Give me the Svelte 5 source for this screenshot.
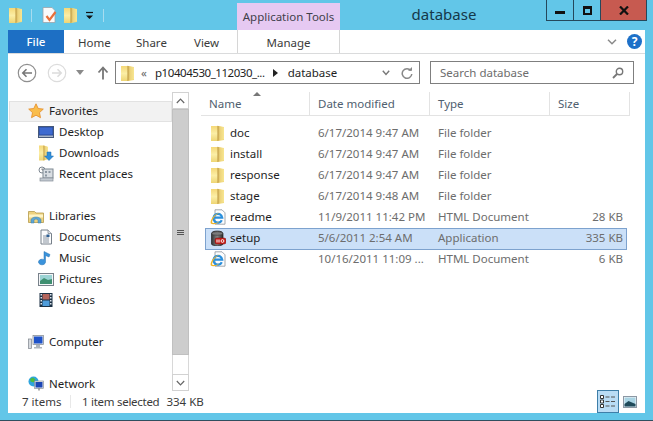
<script>
  const nav = [
    { label: 'Favorites', icon: 'star', top: true, hover: true },
    { label: 'Desktop', icon: 'desktop' },
    { label: 'Downloads', icon: 'downloads' },
    { label: 'Recent places', icon: 'recent' },
    { gap: true },
    { label: 'Libraries', icon: 'library', top: true },
    { label: 'Documents', icon: 'doc' },
    { label: 'Music', icon: 'music' },
    { label: 'Pictures', icon: 'pictures' },
    { label: 'Videos', icon: 'videos' },
    { gap: true },
    { label: 'Computer', icon: 'computer', top: true },
    { gap: true },
    { label: 'Network', icon: 'network', top: true }
  ];

  const files = [
    { name: 'doc', icon: 'folder', date: '6/17/2014 9:47 AM', type: 'File folder', size: '' },
    { name: 'install', icon: 'folder', date: '6/17/2014 9:47 AM', type: 'File folder', size: '' },
    { name: 'response', icon: 'folder', date: '6/17/2014 9:47 AM', type: 'File folder', size: '' },
    { name: 'stage', icon: 'folder', date: '6/17/2014 9:48 AM', type: 'File folder', size: '' },
    { name: 'readme', icon: 'ie', date: '11/9/2011 11:42 PM', type: 'HTML Document', size: '28 KB' },
    { name: 'setup', icon: 'setup', date: '5/6/2011 2:54 AM', type: 'Application', size: '335 KB', selected: true },
    { name: 'welcome', icon: 'ie', date: '10/16/2011 11:09 ...', type: 'HTML Document', size: '6 KB' }
  ];
</script>

{#snippet icon(name)}
  <svg class="ico" viewBox="0 0 16 16" width="16" height="16" aria-hidden="true">
    {#if name === 'folder'}
      <path d="M1 1h7l6 1v13l-6 1H1z" fill="url(#fold)" />
      <path d="M7.500 .8L14 2.500v11.500l-6.500 2z" fill="url(#foldDark)" />
    {:else if name === 'star'}
      <path d="M8 .8l2.200 4.700 5.100.6-3.800 3.500 1 5.100L8 12.200l-4.500 2.500 1-5.100L.7 6.100l5.100-.6z" fill="#f9bd4c" stroke="#e58a25" stroke-width=".8" />
    {:else if name === 'desktop'}
      <rect x="0.500" y="2.500" width="15" height="11" fill="#2a4a9a" stroke="#45587a" />
      <rect x="1.500" y="3.500" width="13" height="7" fill="#3d6ad0" />
      <rect x="1" y="11.500" width="14" height="1.500" fill="#a9b6c8" />
    {:else if name === 'downloads'}
      <path d="M1 .5h5l4 1.500v12l-4 1.500H1z" fill="url(#fold)" />
      <path d="M5.500 .5l4.500 1.500v12l-4.500 1.500z" fill="url(#foldDark)" />
      <path d="M9 7h4v4h2.500L11 15.500 6.500 11H9z" fill="#2f8fdc" stroke="#1d6aaa" stroke-width=".5" />
    {:else if name === 'recent'}
      <circle cx="4" cy="4" r="3" fill="#fff" stroke="#7d8791" />
      <path d="M4 2.500V4h1.500" fill="none" stroke="#555" stroke-width=".7" />
      <rect x="5" y="3" width="10" height="9" fill="#d9dee3" stroke="#7d8791" />
      <path d="M7 5h2v2H7zM10.500 5h2v2h-2zM7 8.500h2v2H7z" fill="#8d98a3" />
      <rect x="2" y="12" width="13" height="3" fill="#c3cad1" stroke="#858e97" stroke-width=".7" />
    {:else if name === 'library'}
      <path d="M.5 3.500h6l1.500 1.500h7.500v9.500H.5z" fill="#eed27e" stroke="#b59a4c" stroke-width=".8" />
      <path d="M1 6.500h14v3H1z" fill="#fff4c4" />
      <path d="M3 15v-3a5 3 0 0 1 10 0v3h-3v-2.500a2 1.500 0 0 0-4 0V15z" fill="#5ea6d4" stroke="#3a7ea8" stroke-width=".5" />
    {:else if name === 'doc'}
      <path d="M3 1h7l3.500 3.500V15H3z" fill="#fbfcfd" stroke="#77808a" />
      <path d="M10 1v3.500h3.500" fill="#dfe4e9" stroke="#77808a" stroke-width=".7" />
      <path d="M5 7h6M5 9h6M5 11h6M5 13h6" stroke="#6d7a88" stroke-width=".8" />
      <rect x="8.500" y="5.500" width="3" height="2.500" fill="#2d5f93" />
    {:else if name === 'music'}
      <path d="M6 1.500l6 3-1 2.500-3.500-1.500V12a3.500 2.800 0 1 1-1.500-2.300z" fill="#3a93dc" stroke="#2470b0" stroke-width=".5" />
    {:else if name === 'pictures'}
      <rect x="0.500" y="2.500" width="15" height="12" fill="#f3f5f7" stroke="#78818a" />
      <rect x="2" y="4" width="12" height="9" fill="#9bd3d4" />
      <path d="M2 10l4-3 4 2 4-1v5H2z" fill="#3e8f70" />
    {:else if name === 'videos'}
      <rect x="1.500" y="1" width="13" height="14" fill="#1c3144" />
      <path d="M2.500 2h1.500v1.500H2.500zM2.500 5h1.500v1.500H2.500zM2.500 8h1.500v1.500H2.500zM2.500 11h1.500v1.500H2.500zM12 2h1.500v1.500H12zM12 5h1.500v1.500H12zM12 8h1.500v1.500H12zM12 11h1.500v1.500H12z" fill="#dce6ef" />
      <rect x="4.500" y="2" width="7" height="5.500" fill="#b4655c" />
      <rect x="4.500" y="8.500" width="7" height="5.500" fill="#4f9ddb" />
    {:else if name === 'computer'}
      <rect x="0.500" y="5" width="3" height="9.500" fill="#d6dadf" stroke="#7c848c" stroke-width=".7" />
      <rect x="5" y="1.500" width="10.500" height="9" fill="#e6e9ed" stroke="#7c848c" stroke-width=".7" />
      <rect x="6" y="2.500" width="8.500" height="7" fill="#1f53c9" />
      <path d="M8 11h4v2h2v1.500H6V13h2z" fill="#aeb5bc" />
    {:else if name === 'network'}
      <circle cx="5.500" cy="5.500" r="5" fill="#2fa5de" />
      <path d="M2 3l3-1.500 2.500 2-2 3-3-1zM7 8l2 1-2 2z" fill="#4dbb3e" />
      <rect x="6.500" y="5" width="9" height="7.500" fill="#e6e9ed" stroke="#7c848c" stroke-width=".6" />
      <rect x="7.500" y="6" width="7" height="5.500" fill="#1c46b4" />
      <path d="M10.500 12.500h1v2h-1z" fill="#555" />
    {:else if name === 'ie'}
      <path d="M5 .8h7l3 3v11.400H5z" fill="#fcfdfe" stroke="#8a929a" stroke-width=".8" />
      <path d="M11.800 11.200A4.400 4.400 0 1 1 12.200 8.600H4" fill="none" stroke="#2a8fdc" stroke-width="2.200" />
      <path d="M.8 14.500C-.4 11 4.500 4.500 10 3.500 5.500 5.500 2.300 10 2 13.500c2 1 5 .8 8-1.500-2.800 3.200-7.200 4.200-9.200 2.500z" fill="#f0b429" />
    {:else if name === 'setup'}
      <path d="M1.500 3.500c0-3.300 11.500-3.300 11.500 0v10.500c0 2.400-11.500 2.400-11.500 0z" fill="url(#drum)" stroke="#222" stroke-width=".7" />
      <ellipse cx="7.250" cy="3.500" rx="5.500" ry="1.800" fill="#7c7c7c" stroke="#2a2a2a" stroke-width=".5" />
      <rect x="5" y="8" width="11" height="6" rx="2" fill="#c6201c" stroke="#7c0f0f" stroke-width=".5" />
      <path d="M7 9.500v3M9 9.500v3" stroke="#fff" stroke-width="1" />
      <circle cx="12.500" cy="11" r="1.400" fill="none" stroke="#fff" stroke-width=".9" />
    {/if}
  </svg>
{/snippet}

<svg class="defs" width="0" height="0" aria-hidden="true">
  <defs>
    <linearGradient id="fold" x1="0" y1="0" x2="0" y2="1">
      <stop offset="0" stop-color="#f5d877" />
      <stop offset=".5" stop-color="#fbeea6" />
      <stop offset="1" stop-color="#eed574" />
    </linearGradient>
    <linearGradient id="foldDark" x1="0" y1="0" x2="1" y2="0">
      <stop offset="0" stop-color="#b8933c" />
      <stop offset=".35" stop-color="#ecd27a" />
      <stop offset="1" stop-color="#f8e691" />
    </linearGradient>
    <linearGradient id="drum" x1="0" y1="0" x2="1" y2="0">
      <stop offset="0" stop-color="#333" />
      <stop offset=".5" stop-color="#858585" />
      <stop offset="1" stop-color="#2c2c2c" />
    </linearGradient>
  </defs>
</svg>

<div class="window">
  <header class="titlebar">
    <div class="qat">
      <span class="qat-folder">{@render icon('folder')}</span>
      <span class="qat-sep"></span>
      <svg class="qat-note" viewBox="0 0 16 16" width="16" height="16" aria-hidden="true">
        <path d="M2 .5h9l3 3v12H2z" fill="#fafafa" stroke="#9aa3ab" stroke-width=".8" />
        <path d="M5.500 9l3 4 6-8" fill="none" stroke="#e8703a" stroke-width="2.200" />
      </svg>
      <span class="qat-folder second">{@render icon('folder')}</span>
      <svg class="qat-drop" viewBox="0 0 9 9" width="9" height="9" aria-hidden="true">
        <path d="M1 1.500h7" stroke="#111" stroke-width="1.200" />
        <path d="M1 4.500h7L4.500 8z" fill="#111" />
      </svg>
      <span class="qat-sep last"></span>
    </div>
    <div class="tools-tab">Application Tools</div>
    <div class="title">database</div>
    <div class="controls">
      <button class="ctl min" aria-label="Minimize"><span></span></button>
      <button class="ctl max" aria-label="Maximize"><span></span></button>
      <button class="ctl close" aria-label="Close">
        <svg viewBox="0 0 10 9" width="10" height="9"><path d="M1 .5l8 8M9 .5l-8 8" stroke="#111" stroke-width="2.200" /></svg>
      </button>
    </div>
  </header>

  <div class="body">
    <nav class="ribbon">
      <div class="tab file">File</div>
      <div class="tab home">Home</div>
      <div class="tab share">Share</div>
      <div class="tab view">View</div>
      <div class="tab manage">Manage</div>
      <svg class="chev" viewBox="0 0 10 6" width="10" height="6" aria-hidden="true"><path d="M1 .8l4 4 4-4" fill="none" stroke="#8a8a8a" stroke-width="1.500" /></svg>
      <div class="help">?</div>
    </nav>

    <div class="addressrow">
      <div class="navbtns">
        <svg viewBox="0 0 20 20" width="20" height="20" aria-hidden="true">
          <circle cx="10" cy="10" r="8.700" fill="#fff" stroke="#8f8f8f" stroke-width="1.200" />
          <path d="M15 10H6M9.500 6.300L5.800 10l3.700 3.700" fill="none" stroke="#777" stroke-width="1.600" />
        </svg>
        <svg class="fwd" viewBox="0 0 20 20" width="20" height="20" aria-hidden="true">
          <circle cx="10" cy="10" r="8.700" fill="#fff" stroke="#dcdcdc" stroke-width="1.200" />
          <path d="M5 10h9M10.500 6.300l3.700 3.700-3.700 3.700" fill="none" stroke="#dcdcdc" stroke-width="1.600" />
        </svg>
        <svg class="recent-drop" viewBox="0 0 8 5" width="8" height="5" aria-hidden="true"><path d="M0 0h8L4 5z" fill="#8a8a8a" /></svg>
        <svg class="up" viewBox="0 0 12 14" width="12" height="14" aria-hidden="true"><path d="M6 13.500V2M1.500 6.500L6 1.500l4.500 5" fill="none" stroke="#777" stroke-width="1.800" /></svg>
      </div>
      <div class="address">
        {@render icon('folder')}
        <span class="crumb-more">«</span>
        <span class="crumb long">p10404530_112030_...</span>
        <svg class="crumb-arrow" viewBox="0 0 5 8" width="5" height="8" aria-hidden="true"><path d="M0 0l5 4-5 4z" fill="#222" /></svg>
        <span class="crumb">database</span>
        <svg class="addr-chev" viewBox="0 0 8 6" width="8" height="6" aria-hidden="true"><path d="M.8.800L4 4.500 7.200.800" fill="none" stroke="#777" stroke-width="1.400" /></svg>
        <svg class="refresh" viewBox="0 0 12 12" width="12" height="12" aria-hidden="true">
          <path d="M9.800 3.500A4.800 4.800 0 1 0 10.800 7" fill="none" stroke="#888" stroke-width="1.500" />
          <path d="M7 3.800h4V0z" fill="#888" />
        </svg>
      </div>
      <div class="search">
        <span>Search database</span>
        <svg viewBox="0 0 12 12" width="12" height="12" aria-hidden="true">
          <circle cx="7.500" cy="4.500" r="3.200" fill="none" stroke="#777" stroke-width="1.400" />
          <path d="M5 7L1 11" stroke="#777" stroke-width="1.800" />
        </svg>
      </div>
    </div>

    <div class="main">
      <aside class="navpane">
        <ul class="tree">
          {#each nav as item}
            {#if item.gap}
              <li class="tree-gap"></li>
            {:else}
              <li class="tree-row" class:top={item.top} class:hover={item.hover}>
                {@render icon(item.icon)}
                <span>{item.label}</span>
              </li>
            {/if}
          {/each}
        </ul>
        <div class="scrollbar">
          <div class="sb-btn"><svg viewBox="0 0 9 6" width="9" height="6" aria-hidden="true"><path d="M.8 5L4.500 1.200 8.200 5" fill="none" stroke="#666" stroke-width="1.200" /></svg></div>
          <div class="sb-thumb"><span></span><span></span><span></span></div>
          <div class="sb-track"></div>
          <div class="sb-btn"><svg viewBox="0 0 9 6" width="9" height="6" aria-hidden="true"><path d="M.8 1L4.500 4.800 8.200 1" fill="none" stroke="#666" stroke-width="1.200" /></svg></div>
        </div>
      </aside>

      <section class="list">
        <div class="headers">
          <svg class="sort" viewBox="0 0 8 4" width="8" height="4" aria-hidden="true"><path d="M4 0l4 4H0z" fill="#777" /></svg>
          <div class="col">Name</div>
          <div class="col">Date modified</div>
          <div class="col">Type</div>
          <div class="col">Size</div>
        </div>
        <div class="rows">
          {#each files as f}
            <div class="row" class:selected={f.selected}>
              <div class="cell name">{@render icon(f.icon)}<span>{f.name}</span></div>
              <div class="cell">{f.date}</div>
              <div class="cell">{f.type}</div>
              <div class="cell size">{f.size}</div>
            </div>
          {/each}
        </div>
      </section>
    </div>

    <footer class="status">
      <span class="count">7 items</span>
      <span class="status-sep"></span>
      <span class="selected-count">1 item selected</span>
      <span class="bytes">334 KB</span>
      <div class="views">
        <div class="view-btn active">
          <svg viewBox="0 0 16 13" width="16" height="13" aria-hidden="true">
            <path d="M.5.500h3v3h-3zM.5 5h3v3h-3zM.5 9.500h3v3h-3z" fill="#fff" stroke="#333" />
            <path d="M5.500 2h4M11 2h4M5.500 6.500h4M11 6.500h4M5.500 11h4M11 11h4" stroke="#555" />
          </svg>
        </div>
        <div class="view-btn">
          <svg viewBox="0 0 14 12" width="14" height="12" aria-hidden="true">
            <rect x=".5" y=".5" width="13" height="11" fill="#f4f6f8" stroke="#8c98a4" />
            <rect x="1.500" y="1.500" width="11" height="9" fill="#a9d4e4" />
            <path d="M1.500 8l4-3 7 3v2.500h-11z" fill="#1f4a5a" />
          </svg>
        </div>
      </div>
    </footer>
  </div>
</div>

<style>
  :global(body) {
    margin: 0;
    background: #62c6e8;
  }

  .defs {
    position: absolute;
  }

  .window {
    width: 653px;
    height: 421px;
    box-sizing: border-box;
    display: flex;
    flex-direction: column;
    background: #62c6e8;
    border-bottom: 1px solid #2f4f5f;
    font-family: 'Noto Sans', 'Open Sans', sans-serif;
    font-size: 11.5px;
    color: #1e1e1e;
    overflow: hidden;
  }

  .ico {
    flex: none;
    display: block;
  }

  /* title bar */
  .titlebar {
    height: 30px;
    flex: none;
    display: flex;
    align-items: flex-start;
  }

  .qat {
    width: 237px;
    flex: none;
    height: 30px;
    display: flex;
    align-items: center;
    padding-left: 8px;
    box-sizing: border-box;
  }

  .qat-folder {
    flex: none;
  }

  .qat-folder.second {
    margin-left: 6px;
  }

  .qat-note {
    flex: none;
    margin-left: 9px;
  }

  .qat-sep {
    width: 1px;
    height: 13px;
    background: #a7dcef;
    margin-left: 7px;
  }

  .qat-sep.last {
    margin-left: 9px;
  }

  .qat-drop {
    margin-left: 6px;
  }

  .tools-tab {
    width: 103px;
    flex: none;
    height: 27px;
    margin-top: 3px;
    background: #e6c9f2;
    text-align: center;
    line-height: 27px;
    color: #3f3f4a;
  }

  .title {
    flex: none;
    width: 206px;
    padding-left: 2px;
    box-sizing: border-box;
    text-align: center;
    font-size: 15px;
    line-height: 28px;
    color: #15384a;
  }

  .controls {
    display: flex;
    height: 21px;
    flex: none;
  }

  .ctl {
    border: 1px solid #24485c;
    border-top: 0;
    border-left: 0;
    background: transparent;
    padding: 0;
    height: 21px;
    display: flex;
    align-items: center;
    justify-content: center;
  }

  .ctl.min {
    width: 28px;
    border-left: 1px solid #24485c;
  }

  .ctl.min span {
    width: 10px;
    height: 3px;
    background: #111;
    margin-top: 4px;
  }

  .ctl.max {
    width: 27px;
  }

  .ctl.max span {
    width: 5px;
    height: 4px;
    border: 2px solid #111;
    border-top-width: 3px;
  }

  .ctl.close {
    width: 46px;
    background: #c75a50;
  }

  /* everything in the white client area */
  .body {
    flex: 1;
    min-height: 0;
    margin: 0 8px 7px;
    width: 637px;
    background: #fff;
    display: flex;
    flex-direction: column;
  }

  .ribbon {
    height: 23px;
    flex: none;
    display: flex;
    align-items: center;
    border-bottom: 1px solid #dadbdc;
    color: #3b3b3b;
  }

  .tab {
    height: 100%;
    line-height: 25px;
    box-sizing: border-box;
  }

  .tab.file {
    width: 56px;
    background: #1d6fc4;
    color: #fff;
    text-align: center;
    font-weight: 500;
    line-height: 23px;
  }

  .tab.home {
    width: 58px;
    padding-left: 14px;
  }

  .tab.share {
    width: 58px;
    padding-left: 14px;
  }

  .tab.view {
    width: 57px;
    padding-left: 14px;
  }

  .tab.manage {
    width: 103px;
    border-left: 1px solid #d6d6d6;
    border-right: 1px solid #d6d6d6;
    text-align: center;
  }

  .chev {
    margin-left: 267px;
  }

  .help {
    width: 15px;
    height: 15px;
    margin-left: 10px;
    border-radius: 50%;
    background: #1d70c8;
    color: #fff;
    text-align: center;
    line-height: 15px;
    font-size: 12px;
    font-weight: 700;
  }

  /* address row */
  .addressrow {
    height: 37px;
    flex: none;
    display: flex;
    align-items: center;
  }

  .navbtns {
    width: 107px;
    flex: none;
    display: flex;
    align-items: center;
    padding-left: 9px;
    box-sizing: border-box;
  }

  .fwd {
    margin-left: 10px;
  }

  .recent-drop {
    margin-left: 9px;
  }

  .up {
    margin-left: 13px;
  }

  .address,
  .search {
    height: 23px;
    box-sizing: border-box;
    border: 1px solid #7f7f7f;
    display: flex;
    align-items: center;
    flex: none;
  }

  .address {
    width: 305px;
    padding-left: 4px;
    color: #1e1e1e;
  }

  .crumb-more {
    margin-left: 5px;
    width: 14px;
    color: #666;
  }

  .crumb.long {
    letter-spacing: -.45px;
  }

  .crumb-arrow {
    margin: 0 10px 0 8px;
  }

  .addr-chev {
    margin-left: auto;
  }

  .refresh {
    margin: 0 6px 0 11px;
  }

  .search {
    width: 204px;
    margin-left: 10px;
    padding: 0 9px;
    justify-content: space-between;
    color: #6d6d6d;
  }

  /* navigation pane */
  .main {
    flex: 1;
    min-height: 0;
    display: flex;
  }

  .navpane {
    width: 181px;
    flex: none;
    display: flex;
    padding-top: 1px;
    box-sizing: border-box;
  }

  .tree {
    width: 164px;
    flex: none;
    list-style: none;
    margin: 9px 0 0;
    padding: 0 0 0 1px;
    box-sizing: border-box;
  }

  .tree-gap {
    height: 21px;
  }

  .tree-row {
    height: 21px;
    display: flex;
    align-items: center;
    gap: 5px;
    padding-left: 29px;
    padding-bottom: 2px;
    box-sizing: border-box;
  }

  .tree-row.top {
    padding-left: 19px;
  }

  .tree-row.hover {
    background: #f2f2f2;
    border: 1px solid #e2e2e2;
    padding-left: 18px;
    padding-bottom: 2px;
  }

  .scrollbar {
    width: 17px;
    flex: none;
    height: 299px;
    display: flex;
    flex-direction: column;
  }

  .sb-btn {
    height: 17px;
    flex: none;
    box-sizing: border-box;
    border: 1px solid #d2d2d2;
    display: flex;
    align-items: center;
    justify-content: center;
    background: #fff;
  }

  .sb-thumb {
    height: 246px;
    flex: none;
    box-sizing: border-box;
    background: #cdcdcd;
    border: 1px solid #c0c0c0;
    display: flex;
    flex-direction: column;
    align-items: center;
    justify-content: center;
    gap: 1px;
  }

  .sb-thumb span {
    width: 7px;
    height: 1px;
    background: #555;
  }

  .sb-track {
    flex: 1;
    border: solid #d8d8d8;
    border-width: 0 1px;
  }

  /* file list */
  .list {
    flex: 1;
    min-width: 0;
    padding-top: 1px;
  }

  .headers {
    position: relative;
    margin-left: 12px;
    width: 429px;
    height: 24px;
    box-sizing: border-box;
    display: grid;
    grid-template-columns: 109px 120px 120px 80px;
    border-bottom: 1px solid #e3e3e3;
    border-right: 1px solid #e3e3e3;
    color: #50606f;
  }

  .sort {
    position: absolute;
    left: 52px;
    top: 0;
  }

  .col {
    padding-left: 8px;
    line-height: 23px;
    border-right: 1px solid #e3e3e3;
  }

  .col:last-of-type {
    border-right: 0;
  }

  .rows {
    margin: 7px 0 0 16px;
    width: 422px;
  }

  .row {
    height: 21px;
    display: grid;
    grid-template-columns: 105px 120px 120px 77px;
    align-items: center;
    color: #6d6d6d;
    box-sizing: border-box;
    padding-bottom: 2px;
  }

  .row.selected {
    background: #cbe0f8;
    height: 22px;
    margin-bottom: -1px;
    padding-bottom: 3px;
    outline: 1px solid #7da2ce;
    outline-offset: -1px;
  }

  .cell {
    padding-left: 8px;
    white-space: nowrap;
  }

  .cell.name {
    padding-left: 5px;
    display: flex;
    align-items: center;
    gap: 4px;
    color: #1e1e1e;
  }

  .cell.size {
    padding: 0 4px 0 0;
    text-align: right;
  }

  /* status bar */
  .status {
    height: 22px;
    flex: none;
    display: flex;
    align-items: center;
    padding-left: 14px;
    padding-bottom: 2px;
    box-sizing: border-box;
    color: #3a3a3a;
  }

  .count {
    width: 48px;
  }

  .status-sep {
    width: 1px;
    height: 13px;
    background: #e8e8e8;
    margin-right: 11px;
  }

  .selected-count {
    letter-spacing: -.28px;
  }

  .bytes {
    margin-left: 7px;
  }

  .views {
    margin-left: auto;
    margin-right: 8px;
    display: flex;
    align-items: center;
    gap: 4px;
    height: 22px;
    margin-bottom: -2px;
  }

  .view-btn {
    width: 14px;
    height: 100%;
    display: flex;
    align-items: center;
    justify-content: center;
  }

  .view-btn.active {
    width: 22px;
    height: 23px;
    margin-top: -1px;
    box-sizing: border-box;
    background: #b9dcf5;
    border: 1px solid #3e7ea8;
  }
</style>
